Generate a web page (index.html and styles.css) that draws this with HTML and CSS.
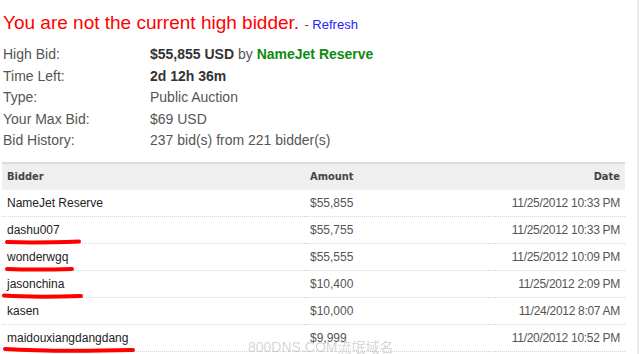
FILE: index.html
```html
<!DOCTYPE html>
<html>
<head>
    <title>Auction Status</title>
    <link rel="stylesheet" href="styles.css">
</head>
<body>
    <div class="page">
        <h1 class="status">You are not the current high bidder. <span class="refresh">- <a href="#">Refresh</a></span></h1>

        <dl class="info">
            <dt>High Bid:</dt>
            <dd><b>$55,855 USD</b> by <b class="reserve">NameJet Reserve</b></dd>
            <dt>Time Left:</dt>
            <dd><b>2d 12h 36m</b></dd>
            <dt>Type:</dt>
            <dd>Public Auction</dd>
            <dt>Your Max Bid:</dt>
            <dd>$69 USD</dd>
            <dt>Bid History:</dt>
            <dd>237 bid(s) from 221 bidder(s)</dd>
        </dl>

        <table class="bids">
            <thead>
                <tr>
                    <th class="bidder">Bidder</th>
                    <th class="amount">Amount</th>
                    <th class="date">Date</th>
                </tr>
            </thead>
            <tbody>
                <tr>
                    <td>NameJet Reserve</td>
                    <td class="amount">$55,855</td>
                    <td class="date">11/25/2012 10:33 PM</td>
                </tr>
                <tr>
                    <td><span class="marked">dashu007<svg class="scribble" width="76" height="8" viewBox="0 0 76 8"><path d="M2 4 Q 30 5 74 3.5"/></svg></span></td>
                    <td class="amount">$55,755</td>
                    <td class="date">11/25/2012 10:33 PM</td>
                </tr>
                <tr>
                    <td><span class="marked">wonderwgq<svg class="scribble" width="70" height="8" viewBox="0 0 70 8"><path d="M2 4 Q 30 5 67 4"/></svg></span></td>
                    <td class="amount">$55,555</td>
                    <td class="date">11/25/2012 10:09 PM</td>
                </tr>
                <tr>
                    <td><span class="marked wide">jasonchina<svg class="scribble" width="82" height="8" viewBox="0 0 82 8"><path d="M2 3.5 Q 30 5.5 79 4"/></svg></span></td>
                    <td class="amount">$10,400</td>
                    <td class="date">11/25/2012 2:09 PM</td>
                </tr>
                <tr>
                    <td>kasen</td>
                    <td class="amount">$10,000</td>
                    <td class="date">11/24/2012 8:07 AM</td>
                </tr>
                <tr>
                    <td><span class="marked wide">maidouxiangdangdang<svg class="scribble" width="134" height="8" viewBox="0 0 134 8"><path d="M3 3 Q 50 6 131 4"/></svg></span></td>
                    <td class="amount">$9,999</td>
                    <td class="date">11/20/2012 10:52 PM</td>
                </tr>
            </tbody>
        </table>

        <div class="watermark">800DNS.COM流氓域名</div>
    </div>
</body>
</html>
```

FILE: styles.css
```css
body {
    margin: 0;
    background: #fff;
    font-family: "Liberation Sans", Arial, sans-serif;
    color: #555;
}
.page {
    position: relative;
    height: 354px;
    border-right: 2px solid #ececec;
    width: 639px;
    padding: 0 0 0 2px;
    box-sizing: border-box;
    overflow: hidden;
}
.status {
    margin: 0;
    padding: 11px 0 0 1px;
    font-size: 19px;
    font-weight: normal;
    color: #f00;
    line-height: 23px;
}
.refresh {
    font-size: 13px;
    color: #555;
}
.refresh a {
    color: #22f;
    text-decoration: none;
}
.info {
    display: grid;
    grid-template-columns: 147px 1fr;
    margin: 8px 0 0 1px;
    font-size: 14px;
    line-height: 21.6px;
}
.info dt,
.info dd {
    margin: 0;
}
.info b {
    color: #333;
}
.info .reserve {
    color: #118811;
}
.bids {
    width: 623px;
    margin-top: 10px;
    border-collapse: collapse;
    font-size: 12px;
    color: #333;
}
.bids th {
    background: #efefef;
    border-top: 2px solid #dcdcdc;
    height: 26px;
    padding: 0 5px;
    text-align: left;
    font-family: "DejaVu Sans Condensed", "DejaVu Sans", sans-serif;
    font-size: 11px;
    font-weight: bold;
    color: #444;
}
.bids td {
    height: 26px;
    padding: 0 5px;
    border-bottom: 1px dotted #d6d6d6;
    color: #222;
}
.bids .bidder {
    width: 293px;
}
.bids .amount {
    width: 180px;
    text-align: left;
    color: #555;
}
.bids th.amount {
    color: #444;
}
.bids .date {
    text-align: right;
    letter-spacing: -0.3px;
    color: #555;
}
.bids th.date {
    letter-spacing: 0;
    color: #444;
}
.marked {
    position: relative;
    display: inline-block;
}
.scribble {
    position: absolute;
    left: -2px;
    top: 15px;
    fill: none;
    stroke: #f00;
    stroke-width: 4;
    stroke-linecap: round;
}
.wide .scribble {
    left: -5px;
}
.watermark {
    position: absolute;
    left: 248px;
    top: 340px;
    font-size: 14px;
    line-height: 15px;
    color: rgba(150, 150, 150, 0.4);
    font-family: "Liberation Sans", "Noto Sans CJK SC", sans-serif;
}
```
